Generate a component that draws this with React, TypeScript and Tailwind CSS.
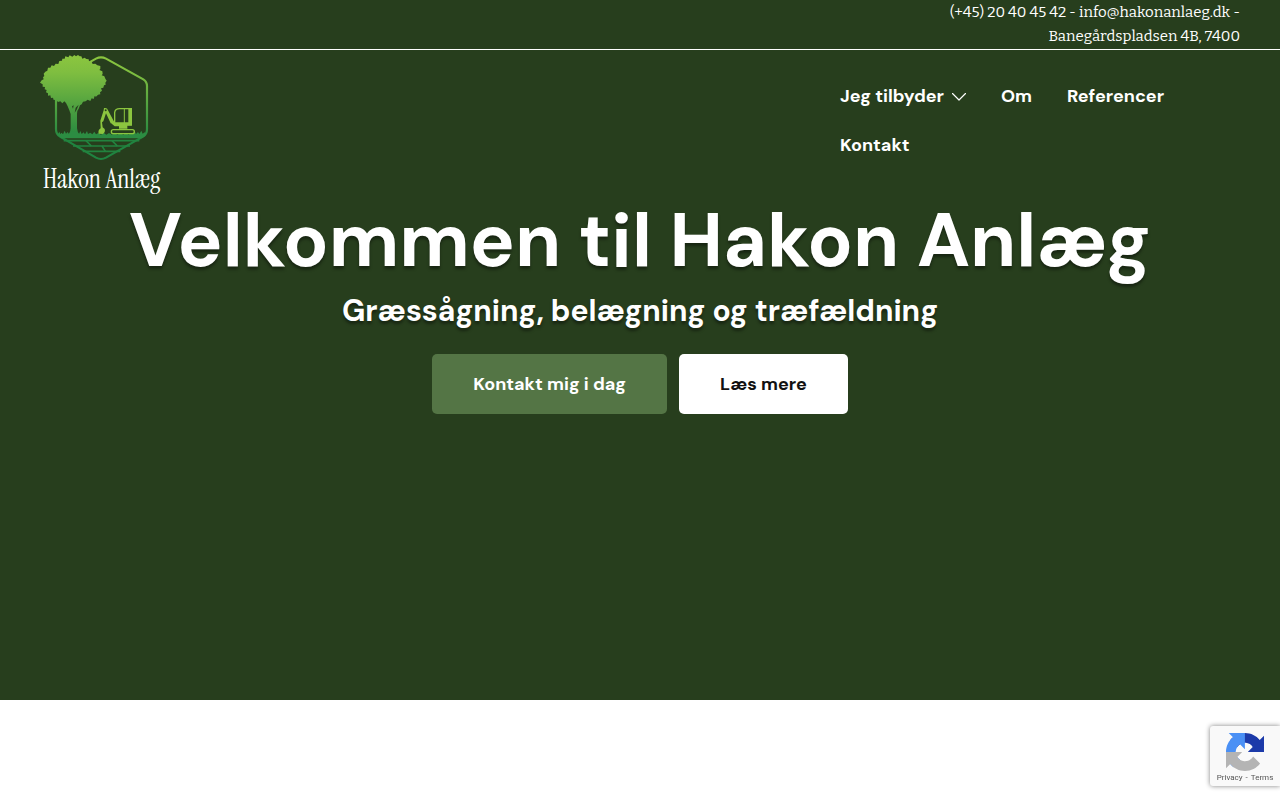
function LogoMark() {
  return (
    <svg viewBox="30 30 360 321" className="block h-[107px] w-[120px]" fill="none" aria-hidden="true">
      <defs>
        <linearGradient id="leaf" gradientUnits="userSpaceOnUse" x1="0" y1="30" x2="0" y2="290">
          <stop offset="0" stopColor="#8cc63f" />
          <stop offset="0.2" stopColor="#7fbe40" />
          <stop offset="1" stopColor="#1f8440" />
        </linearGradient>
      </defs>
      <path
        d="M178 52L198 41Q213 33 228 41L340 103Q351 110 351 123V253Q351 268 339 275L228 338Q213 346 198 338L90 275Q78 268 78 253V160"
        stroke="url(#leaf)"
        strokeWidth="6.5"
      />
      <path
        d="M30 113L35 106L41 103L39 97L43 93L41 86L46 80L52 77L54 68L61 68L65 61L72 63L77 56L85 57L88 48L96 47L97 41L104 41L106 34L115 37L119 31L127 35L133 30L138 34L144 30L149 34L154 34L157 41L164 38L169 42L176 43L177 49L185 51L188 57L196 56L202 61L211 63L211 71L208 75L217 79L218 87L215 91L223 94L226 101L230 107L226 113L227 119L222 121L220 128L213 130L216 137L210 142L211 148L204 149L198 155L194 153L191 162L185 160L181 168L173 164L167 169L159 170L155 178L150 181L146 191L142 198L141 207V250Q142 261 148 269H116Q122 260 122 250V207L118 196L113 184L108 174L103 169L97 175L91 169L84 171L78 164L71 165L69 158L63 159L61 151L54 152L54 145L48 142L50 135L44 133L45 126L38 125L38 118Z"
        fill="url(#leaf)"
      />
      <path d="M126 184L131 181L129 191ZM137 188L146 179L140 194L134 203Z" fill="#273e1d" />
      <path
        d="M80 262L84 267L88 260L91 267L95 263L99 268L104 257L108 266L113 261L117 267L122 260L142 260L147 267L151 258L155 267L161 262L165 268L171 258L174 267L181 263L187 268L193 260L198 268L205 264L213 269L221 263L229 269L237 264L246 269L254 263L262 269L271 264L280 269L288 263L296 269L303 261L308 267L314 258L318 267L324 261L328 267L334 257L338 266L344 262L349 266L345 274L335 280H94L82 270Z"
        fill="#2c8c42"
      />
      <g stroke="#22833f" strokeWidth="5">
        <path d="M101 287H328M129 303H300M158 319H271" />
        <path d="M168 287L184 303M246 287L262 303M216 303L226 319" />
      </g>
      <g transform="translate(180 165)">
        <path
          d="M42 24Q52 22 54 31L74 68L68 72L62 70L48 40L40 64L36 67L38 82L44 87Q47 97 38 102L26 101Q23 91 32 85L31 62L41 31Z"
          fill="#8cc63f"
        />
        <circle cx="47" cy="31" r="3" fill="#273e1d" />
        <path d="M74 68V37Q76 26 89 26H122V74H74" stroke="#8cc63f" strokeWidth="4" />
        <path d="M103 26V69" stroke="#8cc63f" strokeWidth="3" />
        <path d="M115 24H126V77H112V86H87V79H74L66 72V67H115Z" fill="#8cc63f" />
        <rect x="64" y="89" width="69" height="12" rx="6" stroke="#8cc63f" strokeWidth="4" fill="#273e1d" />
      </g>
    </svg>
  );
}

function RecaptchaMark() {
  return (
    <svg viewBox="0 0 64 64" className="h-[38px] w-[38px]" aria-hidden="true">
      <path
        d="M64 31.955l-.033-1.37V4.687l-7.16 7.16C50.948 4.674 42.033.093 32.05.093c-10.4 0-19.622 4.96-25.458 12.64l11.736 11.86a15.55 15.55 0 0 1 4.754-5.334c2.05-1.6 4.952-2.906 8.968-2.906.485 0 .86.057 1.135.163 4.976.393 9.288 3.14 11.828 7.124l-8.307 8.307L64 31.953"
        fill="#1c3aa9"
      />
      <path
        d="M31.862.094l-1.37.033H4.594l7.16 7.16C4.58 13.147 0 22.06 0 32.046c0 10.4 4.96 19.622 12.64 25.458L24.5 45.768a15.55 15.55 0 0 1-5.334-4.754c-1.6-2.05-2.906-4.952-2.906-8.968 0-.485.057-.86.163-1.135.393-4.976 3.14-9.288 7.124-11.828l8.307 8.307L31.86.095"
        fill="#4a90f5"
      />
      <path
        d="M.001 32.045l.033 1.37v25.898l7.16-7.16c5.86 7.173 14.774 11.754 24.76 11.754 10.4 0 19.622-4.96 25.458-12.64l-11.736-11.86a15.55 15.55 0 0 1-4.754 5.334c-2.05 1.6-4.952 2.906-8.968 2.906-.485 0-.86-.057-1.135-.163-4.976-.393-9.288-3.14-11.828-7.124l8.307-8.307c-10.522.04-22.4.066-27.295-.005"
        fill="#b4b4b4"
      />
    </svg>
  );
}

export default function App() {
  return (
    <div className="min-h-screen bg-white font-['DM_Sans',Inter,sans-serif] text-white">
      <div className="bg-[#273e1d]">
        <div className="flex justify-end border-b border-white px-10 pb-px">
          <address className="max-w-[300px] text-right font-['Bitter','DejaVu_Serif_Condensed','DejaVu_Serif',serif] text-[15px] leading-6 not-italic">
            (+45) 20 40 45 42 - info@hakonanlaeg.dk - Banegårdspladsen 4B, 7400
          </address>
        </div>
        <header className="flex items-start justify-between px-10 pt-[5px] pb-[3px]">
          <a href="#" aria-label="Hakon Anlæg" className="flex flex-col">
            <LogoMark />
            <span className="whitespace-nowrap pl-[3px] font-['Instrument_Serif','Liberation_Serif',serif] text-[26px] leading-[35px]">
              Hakon Anlæg
            </span>
          </a>
          <nav className="w-[400px] pt-[17px]">
            <ul className="flex flex-wrap gap-x-[35px] text-lg leading-[49px] font-bold">
              <li>
                <a href="#" className="flex items-center gap-2">
                  Jeg tilbyder
                  <svg viewBox="0 0 14 8" className="h-2 w-3.5" fill="none" stroke="currentColor" aria-hidden="true">
                    <path d="M0.5 0.5L7 7L13.5 0.5" strokeWidth="1.2" strokeLinecap="round" strokeLinejoin="round" />
                  </svg>
                </a>
              </li>
              <li><a href="#">Om</a></li>
              <li><a href="#">Referencer</a></li>
              <li><a href="#">Kontakt</a></li>
            </ul>
          </nav>
        </header>
        <main className="min-h-[500px] px-10 pt-px text-center">
          <h1 className="text-[75px] leading-[80px] font-bold [text-shadow:0_3px_3px_rgba(0,0,0,0.4)]">
            Velkommen til Hakon Anlæg
          </h1>
          <h2 className="pt-2 text-[30px] leading-[44px] font-bold [text-shadow:0_3px_3px_rgba(0,0,0,0.4)]">
            Græssågning, belægning og træfældning
          </h2>
          <div className="mt-[21px] flex justify-center gap-3 text-lg font-bold">
            <button className="h-[60px] rounded-[5px] bg-[#547545] px-[41px]">Kontakt mig i dag</button>
            <button className="h-[60px] rounded-[5px] bg-white px-[41px] text-[#111]">Læs mere</button>
          </div>
        </main>
      </div>
      <aside className="fixed right-0 bottom-3.5 flex h-[60px] w-[70px] flex-col items-center rounded-l-[3px] bg-[#f9f9f9] pt-[7px] font-[Roboto,sans-serif] text-[8px] leading-[14px] text-[#555] shadow-[0_0_5px_gray]">
        <RecaptchaMark />
        <div className="flex gap-[3px]">
          <a href="#">Privacy</a>
          <span>-</span>
          <a href="#">Terms</a>
        </div>
      </aside>
    </div>
  );
}
